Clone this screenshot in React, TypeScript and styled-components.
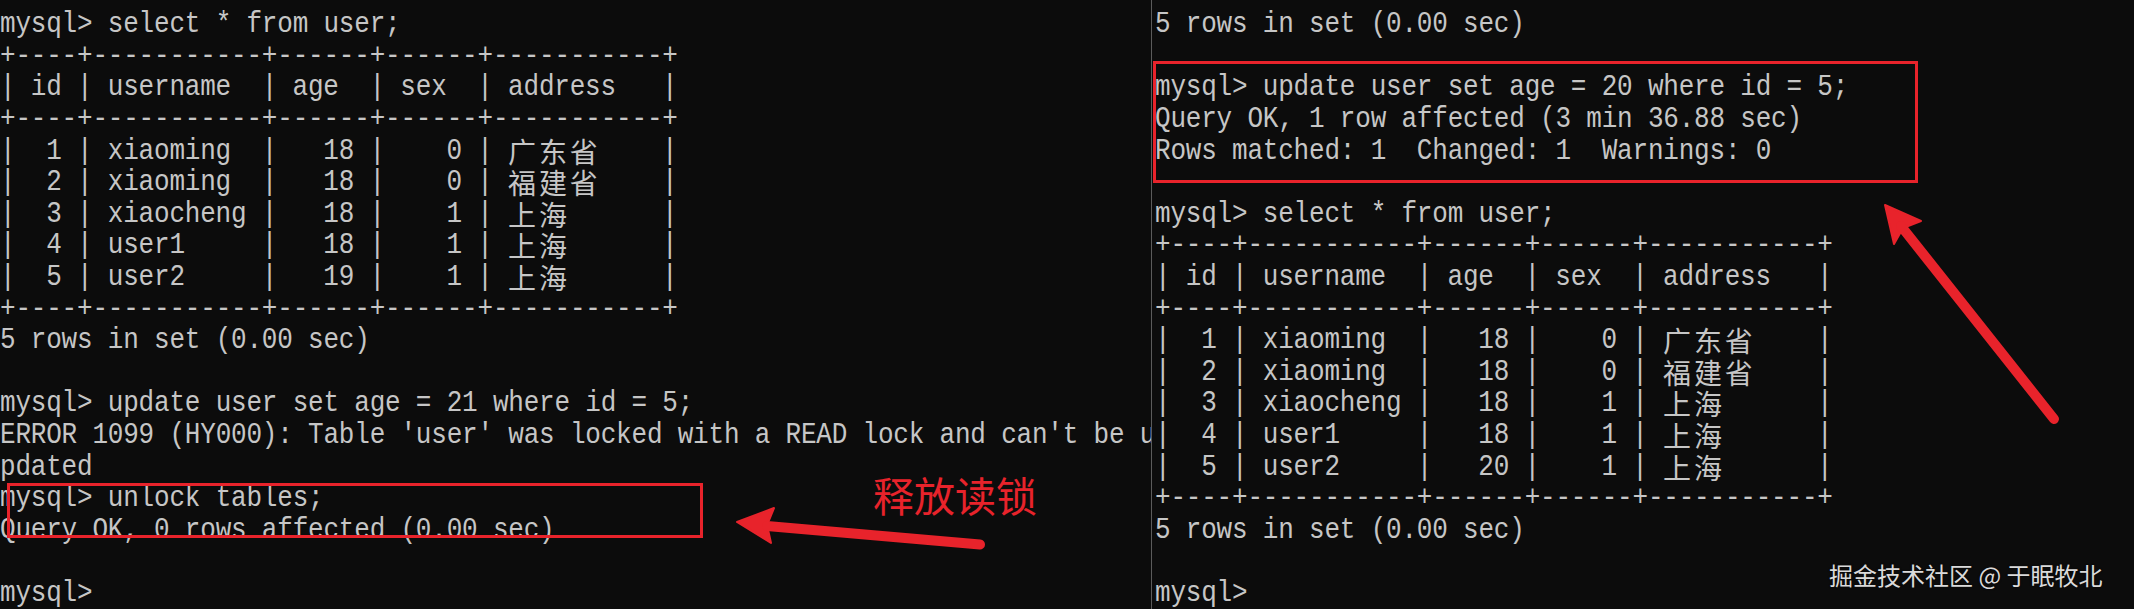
import React from "react";
import styled, { createGlobalStyle } from "styled-components";

const CH = 15.4;
const LH = 31.6;
const RED = "#e8232b";

const Global = createGlobalStyle`
  html, body { margin: 0; padding: 0; background: #0c0c0c; }
  body { overflow: hidden; }
`;

const Screen = styled.div`
  position: relative;
  display: grid;
  grid-template-columns: 1151px 1fr;
  width: 2134px;
  height: 609px;
  background: #0c0c0c;
  color: #c6c6c6;
  font-family: "Liberation Mono", "Noto Sans CJK SC", monospace;
  font-size: 26px;
  letter-spacing: -0.2px;
  line-height: ${LH}px;
  overflow: hidden;
`;

const Pane = styled.div<{ $divider?: boolean }>`
  display: flex;
  flex-direction: column;
  padding-top: 9.2px;
  padding-left: ${(p) => (p.$divider ? 3 : 0)}px;
  border-left: ${(p) => (p.$divider ? "1.5px solid #5b5b5b" : "none")};
  overflow: hidden;
  min-width: 0;
`;

const Line = styled.div`
  height: ${LH}px;
  white-space: pre;
  transform: scaleY(1.1);
`;

const Row = styled.div`
  display: grid;
  grid-template-columns: ${[1, 4, 1, 11, 1, 6, 1, 6, 1, 11, 1]
    .map((n) => n * CH + "px")
    .join(" ")};
  height: ${LH}px;
  white-space: pre;
  transform: scaleY(1.1);
`;

const Bar = styled.span`
  text-align: center;
`;

const Cell = styled.span<{ $align: "left" | "right" }>`
  text-align: ${(p) => p.$align};
  padding: 0 ${CH}px;
  overflow: visible;
`;

const Cjk = styled.span`
  display: inline-block;
  font-family: "Noto Sans CJK SC", sans-serif;
  font-size: 28px;
  letter-spacing: ${2 * CH - 28}px;
  transform: scaleY(0.92);
`;

const RedBox = styled.div<{ $x: number; $y: number; $w: number; $h: number }>`
  position: absolute;
  left: ${(p) => p.$x}px;
  top: ${(p) => p.$y}px;
  width: ${(p) => p.$w}px;
  height: ${(p) => p.$h}px;
  box-sizing: border-box;
  border: 3.5px solid ${RED};
  pointer-events: none;
`;

const Label = styled.div`
  position: absolute;
  left: 873px;
  top: 474px;
  font-family: "Noto Sans CJK SC", sans-serif;
  font-size: 41px;
  line-height: 1;
  letter-spacing: 0;
  color: ${RED};
  white-space: nowrap;
`;

const Watermark = styled.div`
  position: absolute;
  left: 1829px;
  top: 563px;
  font-family: "Noto Sans CJK SC", sans-serif;
  font-size: 24px;
  line-height: 1;
  letter-spacing: 0;
  color: #dadada;
  white-space: nowrap;
  text-shadow: 0 0 2px rgba(0, 0, 0, 0.6);
`;

const Overlay = styled.svg`
  position: absolute;
  left: 0;
  top: 0;
  pointer-events: none;
`;

const BORDER =
  "+" +
  [4, 11, 6, 6, 11].map((n) => "-".repeat(n)).join("+") +
  "+";

type R = [string, string, string, string, string];

const leftRows: R[] = [
  ["1", "xiaoming", "18", "0", "广东省"],
  ["2", "xiaoming", "18", "0", "福建省"],
  ["3", "xiaocheng", "18", "1", "上海"],
  ["4", "user1", "18", "1", "上海"],
  ["5", "user2", "19", "1", "上海"],
];

const rightRows: R[] = leftRows.map((r, i) =>
  i === 4 ? ([r[0], r[1], "20", r[3], r[4]] as R) : r
);

const TableRow: React.FC<{ cells: string[]; header?: boolean }> = ({
  cells,
  header,
}) => {
  const aligns: ("left" | "right")[] = header
    ? ["left", "left", "left", "left", "left"]
    : ["right", "left", "right", "right", "left"];
  return (
    <Row>
      <Bar>|</Bar>
      {cells.map((c, i) => (
        <React.Fragment key={i}>
          <Cell $align={aligns[i]}>
            {i === 4 && !header ? <Cjk>{c}</Cjk> : c}
          </Cell>
          <Bar>|</Bar>
        </React.Fragment>
      ))}
    </Row>
  );
};

const Table: React.FC<{ rows: R[] }> = ({ rows }) => (
  <>
    <Line>{BORDER}</Line>
    <TableRow header cells={["id", "username", "age", "sex", "address"]} />
    <Line>{BORDER}</Line>
    {rows.map((r, i) => (
      <TableRow key={i} cells={r} />
    ))}
    <Line>{BORDER}</Line>
  </>
);

const ERROR_LINE =
  "ERROR 1099 (HY000): Table 'user' was locked with a READ lock and can't be u";

export default function App() {
  return (
    <>
      <Global />
      <Screen>
        <Pane>
          <Line>mysql&gt; select * from user;</Line>
          <Table rows={leftRows} />
          <Line>5 rows in set (0.00 sec)</Line>
          <Line> </Line>
          <Line>mysql&gt; update user set age = 21 where id = 5;</Line>
          <Line>{ERROR_LINE}</Line>
          <Line>pdated</Line>
          <Line>mysql&gt; unlock tables;</Line>
          <Line>Query OK, 0 rows affected (0.00 sec)</Line>
          <Line> </Line>
          <Line>mysql&gt;</Line>
        </Pane>
        <Pane $divider>
          <Line>5 rows in set (0.00 sec)</Line>
          <Line> </Line>
          <Line>mysql&gt; update user set age = 20 where id = 5;</Line>
          <Line>Query OK, 1 row affected (3 min 36.88 sec)</Line>
          <Line>Rows matched: 1  Changed: 1  Warnings: 0</Line>
          <Line> </Line>
          <Line>mysql&gt; select * from user;</Line>
          <Table rows={rightRows} />
          <Line>5 rows in set (0.00 sec)</Line>
          <Line> </Line>
          <Line>mysql&gt;</Line>
        </Pane>

        <RedBox $x={7} $y={483} $w={696} $h={55} />
        <RedBox $x={1153} $y={61} $w={765} $h={122} />

        <Overlay width={2134} height={609} viewBox="0 0 2134 609">
          <g fill={RED} stroke={RED} strokeLinecap="round" strokeLinejoin="round">
            <polygon points="737,522 774,508 767,525 771,543" strokeWidth={2} />
            <line x1={767} y1={526} x2={980} y2={544.5} strokeWidth={10} />
            <polygon points="1885,205 1921,221 1903,228 1894,244" strokeWidth={2} />
            <line x1={1901} y1={226} x2={2054} y2={419} strokeWidth={10} />
          </g>
        </Overlay>

        <Label>释放读锁</Label>
        <Watermark>掘金技术社区 @ 于眠牧北</Watermark>
      </Screen>
    </>
  );
}
